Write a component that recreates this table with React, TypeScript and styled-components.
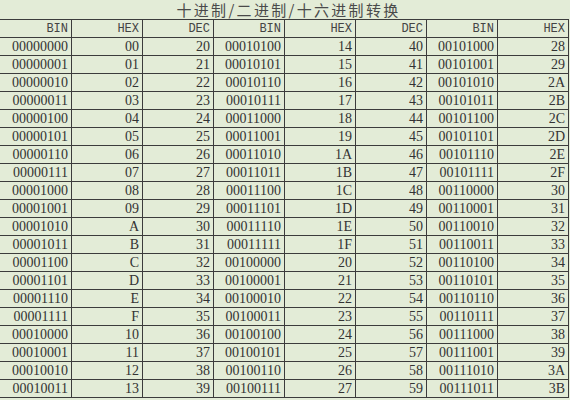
import styled, { createGlobalStyle } from "styled-components";

const GlobalStyle = createGlobalStyle`
  html, body {
    margin: 0;
    padding: 0;
    background: #e3ecd7;
  }
`;

const Sheet = styled.div`
  width: 570px;
  height: 400px;
  overflow: hidden;
  background: #e3ecd7;
  color: #333;
`;

const Title = styled.div`
  height: 20px;
  box-sizing: border-box;
  border-bottom: 1px solid #3c3c3c;
  width: 569px;
  display: flex;
  justify-content: center;
  align-items: center;
  font-family: "Noto Sans CJK SC", sans-serif;
  font-size: 15px;
  letter-spacing: 2.3px;
  line-height: 17px;
  padding-left: 8px;
  color: #4a4a4a;
`;

const Grid = styled.div`
  display: grid;
  grid-template-columns: 72px repeat(7, 71px);
  grid-auto-rows: 18px;
`;

const Cell = styled.div<{ $head?: boolean }>`
  box-sizing: border-box;
  border-right: 1px solid #3c3c3c;
  border-bottom: 1px solid #3c3c3c;
  text-align: right;
  padding-right: 3px;
  white-space: nowrap;
  line-height: 18px;
  font-family: ${(p) =>
    p.$head ? '"Liberation Mono", monospace' : '"Liberation Serif", serif'};
  font-size: ${(p) => (p.$head ? "12px" : "14px")};
  color: ${(p) => (p.$head ? "#444" : "#333")};
`;

const heads = ["BIN", "HEX", "DEC", "BIN", "HEX", "DEC", "BIN", "HEX"];

const bin = (n: number) => n.toString(2).padStart(8, "0");
const hex = (n: number) => {
  const s = n.toString(16).toUpperCase();
  // the first block writes 0-9 with a leading zero, letters alone
  if (n < 10) return "0" + s;
  return s;
};

const rows = Array.from({ length: 20 }, (_, i) => [
  bin(i),
  hex(i),
  String(20 + i),
  bin(20 + i),
  hex(20 + i),
  String(40 + i),
  bin(40 + i),
  hex(40 + i),
]);

export default function App() {
  return (
    <>
      <GlobalStyle />
      <Sheet>
        <Title>十进制/二进制/十六进制转换</Title>
        <Grid>
          {heads.map((h, i) => (
            <Cell key={"h" + i} $head>
              {h}
            </Cell>
          ))}
          {rows.map((r, ri) =>
            r.map((v, ci) => <Cell key={ri + "-" + ci}>{v}</Cell>)
          )}
        </Grid>
      </Sheet>
    </>
  );
}
